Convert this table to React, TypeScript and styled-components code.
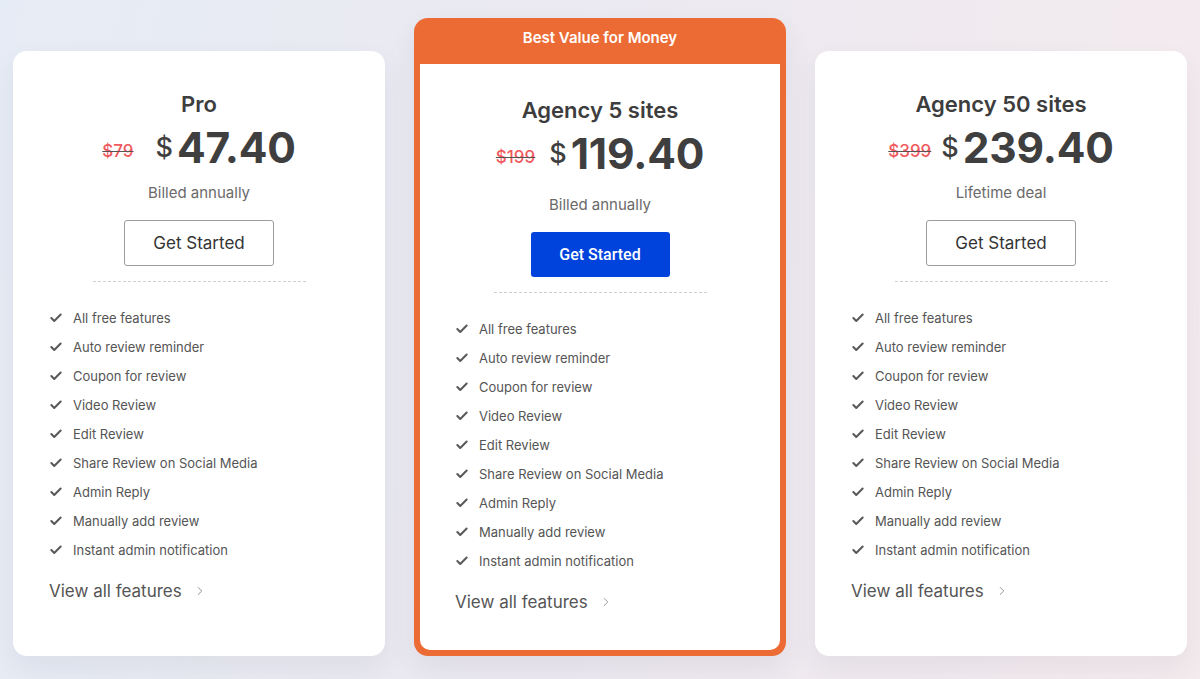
import React from "react";
import styled, { createGlobalStyle } from "styled-components";
import { Check, ChevronRight } from "lucide-react";

const GlobalStyle = createGlobalStyle`
  html, body { margin: 0; padding: 0; }
  body {
    font-family: Inter, "Noto Sans", sans-serif;
    background: linear-gradient(100deg, #e6ecf5 0%, #ebe9f1 45%, #f4ebee 100%);
    min-height: 679px;
    -webkit-font-smoothing: antialiased;
  }
  * { box-sizing: border-box; }
`;

const Page = styled.div`
  width: 1200px;
  height: 679px;
  padding: 18px 13px 23px;
  display: grid;
  grid-template-columns: repeat(3, 372px);
  column-gap: 29px;
  align-items: stretch;
  overflow: hidden;
`;

const Card = styled.div`
  margin-top: 33px;
  background: #fff;
  border-radius: 14px;
  box-shadow: 0 12px 28px rgba(60, 50, 80, 0.07);
  padding: 38px 36px 0;
  display: flex;
  flex-direction: column;
  align-items: center;
`;

const FeaturedFrame = styled.div`
  background: #ec6b35;
  border-radius: 14px;
  padding: 0 6px 6px;
  display: flex;
  flex-direction: column;
  box-shadow: 0 12px 28px rgba(60, 50, 80, 0.08);
`;

const Ribbon = styled.div`
  height: 46px;
  display: flex;
  align-items: center;
  justify-content: center;
  color: #fff;
  font-size: 15px;
  font-weight: 600;
  padding-bottom: 7px;
`;

const FeaturedBody = styled.div`
  flex: 1;
  background: #fff;
  border-radius: 0 0 10px 10px;
  padding: 31px 35px 0;
  display: flex;
  flex-direction: column;
  align-items: center;
`;

const Title = styled.h2`
  margin: 0;
  font-size: 22px;
  line-height: 30px;
  font-weight: 600;
  color: #3d3d3d;
`;

const PriceRow = styled.div<{ $gap: number }>`
  margin-top: 8px;
  display: flex;
  align-items: baseline;
  justify-content: center;
  gap: ${(p) => p.$gap}px;
  line-height: 1;
`;

const OldPrice = styled.span`
  font-size: 17px;
  font-weight: 500;
  color: #f05a5e;
  text-decoration: line-through;
  text-decoration-color: #555;
  text-decoration-thickness: 1px;
`;

const NewPrice = styled.span`
  display: flex;
  align-items: flex-start;
  color: #3f3f3f;
  gap: 4px;
`;

const Currency = styled.span`
  font-size: 27px;
  font-weight: 500;
  margin-top: 7px;
`;

const Amount = styled.span`
  font-size: 42.5px;
  font-weight: 700;
  letter-spacing: -0.2px;
`;

const Billing = styled.div<{ $featured?: boolean }>`
  margin-top: ${(p) => (p.$featured ? 18 : 12)}px;
  font-size: 15px;
  line-height: 22px;
  color: #6a6a6a;
`;

const OutlineButton = styled.button`
  margin-top: 16px;
  width: 150px;
  height: 46px;
  border: 1px solid #9d9d9d;
  border-radius: 3px;
  background: #fff;
  color: #333;
  font-family: Inter, sans-serif;
  font-size: 17px;
  font-weight: 400;
  cursor: pointer;
`;

const SolidButton = styled.button`
  margin-top: 16px;
  width: 139px;
  height: 45px;
  border: none;
  border-radius: 3px;
  background: #0043dc;
  color: #fff;
  font-family: Roboto, sans-serif;
  font-size: 16px;
  font-weight: 500;
  cursor: pointer;
`;

const Divider = styled.hr`
  margin: 15px 0 0;
  width: 213px;
  border: none;
  border-top: 1px dashed #cfcfcf;
`;

const FeatureList = styled.ul`
  list-style: none;
  margin: 22px 0 0;
  padding: 0;
  align-self: stretch;
`;

const Feature = styled.li`
  display: flex;
  align-items: center;
  gap: 10px;
  height: 29px;
  font-size: 13px;
  color: #555;
  svg { flex: none; color: #595959; }
`;

const ViewAll = styled.a`
  margin-top: 13px;
  align-self: flex-start;
  display: flex;
  align-items: center;
  gap: 11px;
  height: 26px;
  font-size: 17px;
  color: #555;
  text-decoration: none;
  cursor: pointer;
  svg { color: #888; }
`;

type Plan = {
  title: string;
  old: string;
  price: string;
  billing: string;
  gap: number;
};

const features = [
  "All free features",
  "Auto review reminder",
  "Coupon for review",
  "Video Review",
  "Edit Review",
  "Share Review on Social Media",
  "Admin Reply",
  "Manually add review",
  "Instant admin notification",
];

function PlanContent({ plan, featured }: { plan: Plan; featured?: boolean }) {
  return (
    <>
      <Title>{plan.title}</Title>
      <PriceRow $gap={plan.gap}>
        <OldPrice>{plan.old}</OldPrice>
        <NewPrice>
          <Currency>$</Currency>
          <Amount>{plan.price}</Amount>
        </NewPrice>
      </PriceRow>
      <Billing $featured={featured}>{plan.billing}</Billing>
      {featured ? <SolidButton>Get Started</SolidButton> : <OutlineButton>Get Started</OutlineButton>}
      <Divider />
      <FeatureList>
        {features.map((f) => (
          <Feature key={f}>
            <Check size={14} strokeWidth={3.5} />
            {f}
          </Feature>
        ))}
      </FeatureList>
      <ViewAll>
        View all features
        <ChevronRight size={14} strokeWidth={1.5} />
      </ViewAll>
    </>
  );
}

const plans: Plan[] = [
  { title: "Pro", old: "$79", price: "47.40", billing: "Billed annually", gap: 22 },
  { title: "Agency 5 sites", old: "$199", price: "119.40", billing: "Billed annually", gap: 14 },
  { title: "Agency 50 sites", old: "$399", price: "239.40", billing: "Lifetime deal", gap: 10 },
];

export default function App() {
  return (
    <>
      <GlobalStyle />
      <Page>
        <Card>
          <PlanContent plan={plans[0]} />
        </Card>
        <FeaturedFrame>
          <Ribbon>Best Value for Money</Ribbon>
          <FeaturedBody>
            <PlanContent plan={plans[1]} featured />
          </FeaturedBody>
        </FeaturedFrame>
        <Card>
          <PlanContent plan={plans[2]} />
        </Card>
      </Page>
    </>
  );
}
